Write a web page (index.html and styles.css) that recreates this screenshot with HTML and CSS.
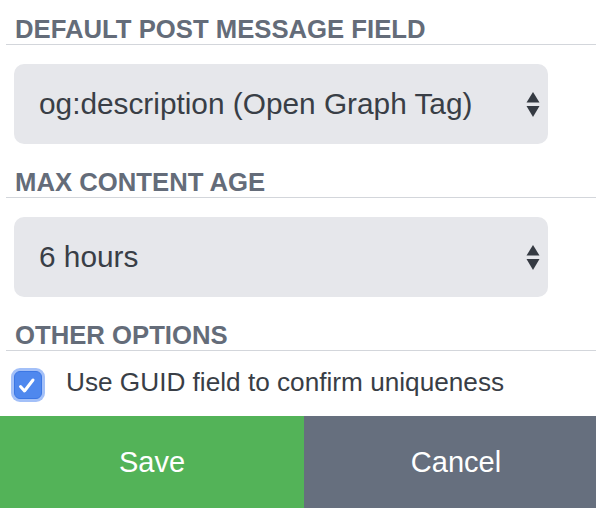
FILE: index.html
```html
<!DOCTYPE html>
<html lang="en">

<head>
	<meta charset="UTF-8">
	<meta name="viewport" content="width=device-width, initial-scale=1.0">
	<title>Feed settings</title>
	<link rel="stylesheet" href="styles.css">
</head>

<body>
	<div class="panel">
		<h2 class="title">Default Post Message Field</h2>
		<div class="select">
			<span>og:description (Open Graph Tag)</span>
			<svg class="arrows" width="14" height="25" viewBox="0 0 14 25">
				<path d="M7 0 L13.5 10.5 L0.5 10.5 Z" />
				<path d="M0.5 14 L13.5 14 L7 25 Z" />
			</svg>
		</div>

		<h2 class="title">Max Content Age</h2>
		<div class="select">
			<span>6 hours</span>
			<svg class="arrows" width="14" height="25" viewBox="0 0 14 25">
				<path d="M7 0 L13.5 10.5 L0.5 10.5 Z" />
				<path d="M0.5 14 L13.5 14 L7 25 Z" />
			</svg>
		</div>

		<h2 class="title">Other Options</h2>
		<label class="option">
			<span class="check">
				<svg width="28" height="28" viewBox="0 0 28 28">
					<path d="M6.5 15.5 L10.5 20 L19 9" />
				</svg>
			</span>
			<span>Use GUID field to confirm uniqueness</span>
		</label>
	</div>

	<div class="actions">
		<button class="btn save">Save</button>
		<button class="btn cancel">Cancel</button>
	</div>
</body>

</html>
```

FILE: styles.css
```css
html,
body {
	margin: 0;
	overflow: hidden;
}

body {
	width: 596px;
	font-family: "Liberation Sans", Arial, sans-serif;
	color: #393e46;
	background: #fff;
}

.panel {
	padding: 14px 0 0 6px;
}

.title {
	margin: 23px 0 0;
	padding-left: 9px;
	font-size: 25.7px;
	line-height: 30px;
	font-weight: bold;
	text-transform: uppercase;
	color: #646c79;
	border-bottom: 1px solid #d3d6db;
}

.title:first-child {
	margin-top: 0;
}

.select {
	display: flex;
	align-items: center;
	justify-content: space-between;
	box-sizing: border-box;
	width: 534px;
	height: 80px;
	margin: 19px 0 0 8px;
	padding: 0 8px 0 25px;
	font-size: 29.8px;
	background-color: #e6e7eb;
	border-radius: 10px;
}

.arrows {
	fill: #353a42;
}

.option {
	display: flex;
	align-items: flex-start;
	margin: 16px 0 0 8px;
	font-size: 26.2px;
	line-height: 30px;
}

.check {
	display: flex;
	box-sizing: border-box;
	width: 28px;
	height: 28px;
	margin: 4px 24px 0 0;
	background-color: #4f88ee;
	border: 1px solid #3c77e4;
	border-radius: 6px;
	box-shadow: 0 0 0 3px #a3c0f8;
}

.check svg {
	margin: -1px;
	fill: none;
	stroke: #fff;
	stroke-width: 3;
	stroke-linecap: round;
	stroke-linejoin: round;
}

.actions {
	display: flex;
	width: 608px;
	margin-top: 17px;
}

.btn {
	flex: 1;
	height: 92px;
	border: 0;
	padding: 0;
	font-family: "Liberation Sans", Arial, sans-serif;
	font-size: 29px;
	color: #fff;
}

.save {
	background-color: #53b358;
}

.cancel {
	background-color: #666f7e;
}
```
